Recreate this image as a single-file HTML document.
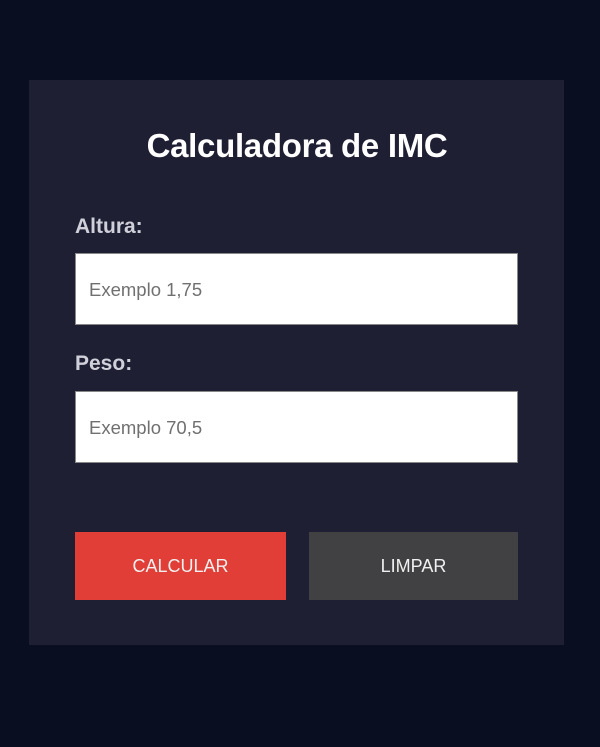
<!DOCTYPE html>
<html><head><meta charset="utf-8"><style>
*{margin:0;padding:0;box-sizing:border-box}
body{width:600px;height:747px;background:#090e21;font-family:"Liberation Sans",sans-serif;position:relative;overflow:hidden}
.card{position:absolute;left:29px;top:80px;width:535px;height:565px;background:#1e1f33}
h1{position:absolute;text-align:center;color:#fff;font-size:33px;font-weight:bold;letter-spacing:-0.3px}
.lbl{position:absolute;left:75px;color:#d0d0da;font-size:21px;font-weight:bold}
.in{position:absolute;left:75px;width:443px;height:72px;background:#fff;border:1px solid #888;color:#707070;font-size:18.5px;padding-left:13px;line-height:72px}
.btn{position:absolute;top:532px;height:68px;color:#f0f0f0;font-size:18px;text-align:center;line-height:68px}
</style></head><body>
<div class="card"></div>
<h1 style="left:0;width:594px;top:127px">Calculadora de IMC</h1>
<div class="lbl" style="top:215px">Altura:</div>
<div class="in" style="top:253px">Exemplo 1,75</div>
<div class="lbl" style="top:352px">Peso:</div>
<div class="in" style="top:391px">Exemplo 70,5</div>
<div class="btn" style="left:75px;width:211px;background:#e03e36">CALCULAR</div>
<div class="btn" style="left:309px;width:209px;background:#414042">LIMPAR</div>
</body></html>
